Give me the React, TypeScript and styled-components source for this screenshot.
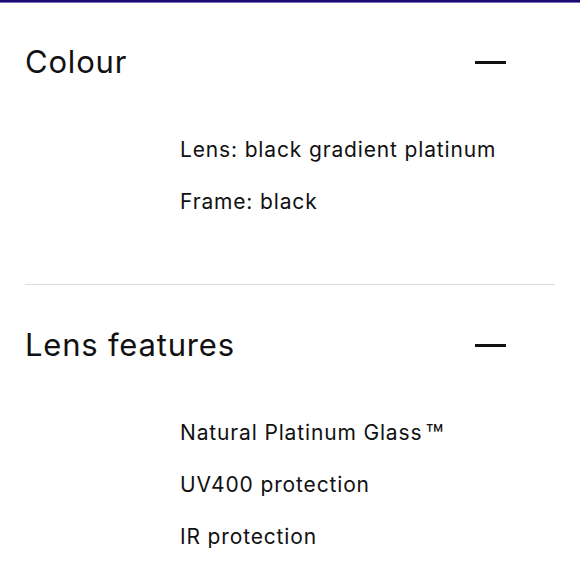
import React from "react";
import styled, { createGlobalStyle } from "styled-components";

const Global = createGlobalStyle`
  html, body { margin: 0; padding: 0; background: #fff; }
  body { font-family: Inter, "Noto Sans", sans-serif; color: #111; }
`;

const Page = styled.div`
  width: 580px;
  height: 580px;
  border-top: 2px solid #1b0a70;
  box-shadow: inset 0 1px 0 #7a70bd;
  box-sizing: border-box;
  overflow: hidden;
`;

const Section = styled.section<{ $divider?: boolean }>`
  margin: 0 25px;
  padding-bottom: 56px;
  border-bottom: ${(p) => (p.$divider ? "1px solid #dcdcdc" : "none")};
`;

const Header = styled.div`
  display: flex;
  align-items: center;
  justify-content: space-between;
  padding-top: 40px;
  height: 40px;
`;

const Title = styled.h2`
  margin: 0;
  font-size: 31px;
  font-weight: 400;
  line-height: 40px;
  letter-spacing: 0.8px;
  color: #111;
`;

const Dash = styled.span`
  display: block;
  width: 31px;
  height: 3px;
  background: #111;
  margin-right: 49px;
`;

const List = styled.ul`
  list-style: none;
  margin: 42px 0 0 155px;
  padding: 0;
`;

const Item = styled.li`
  font-size: 21px;
  line-height: 52px;
  height: 52px;
  letter-spacing: 0.85px;
  color: #111;
`;

const Trademark = styled.span`
  font-size: 1.4em;
  line-height: 0;
  letter-spacing: 0;
  margin-left: 3px;
  vertical-align: -0.22em;
`;

type Entry = { text: string; tm?: boolean };

const sections: { title: string; items: Entry[] }[] = [
  {
    title: "Colour",
    items: [{ text: "Lens: black gradient platinum" }, { text: "Frame: black" }],
  },
  {
    title: "Lens features",
    items: [
      { text: "Natural Platinum Glass", tm: true },
      { text: "UV400 protection" },
      { text: "IR protection" },
    ],
  },
];

export default function App() {
  return (
    <Page>
      <Global />
      {sections.map((s, i) => (
        <Section key={s.title} $divider={i < sections.length - 1}>
          <Header>
            <Title>{s.title}</Title>
            <Dash />
          </Header>
          <List>
            {s.items.map((t) => (
              <Item key={t.text}>
                {t.text}
                {t.tm && <Trademark>™</Trademark>}
              </Item>
            ))}
          </List>
        </Section>
      ))}
    </Page>
  );
}
